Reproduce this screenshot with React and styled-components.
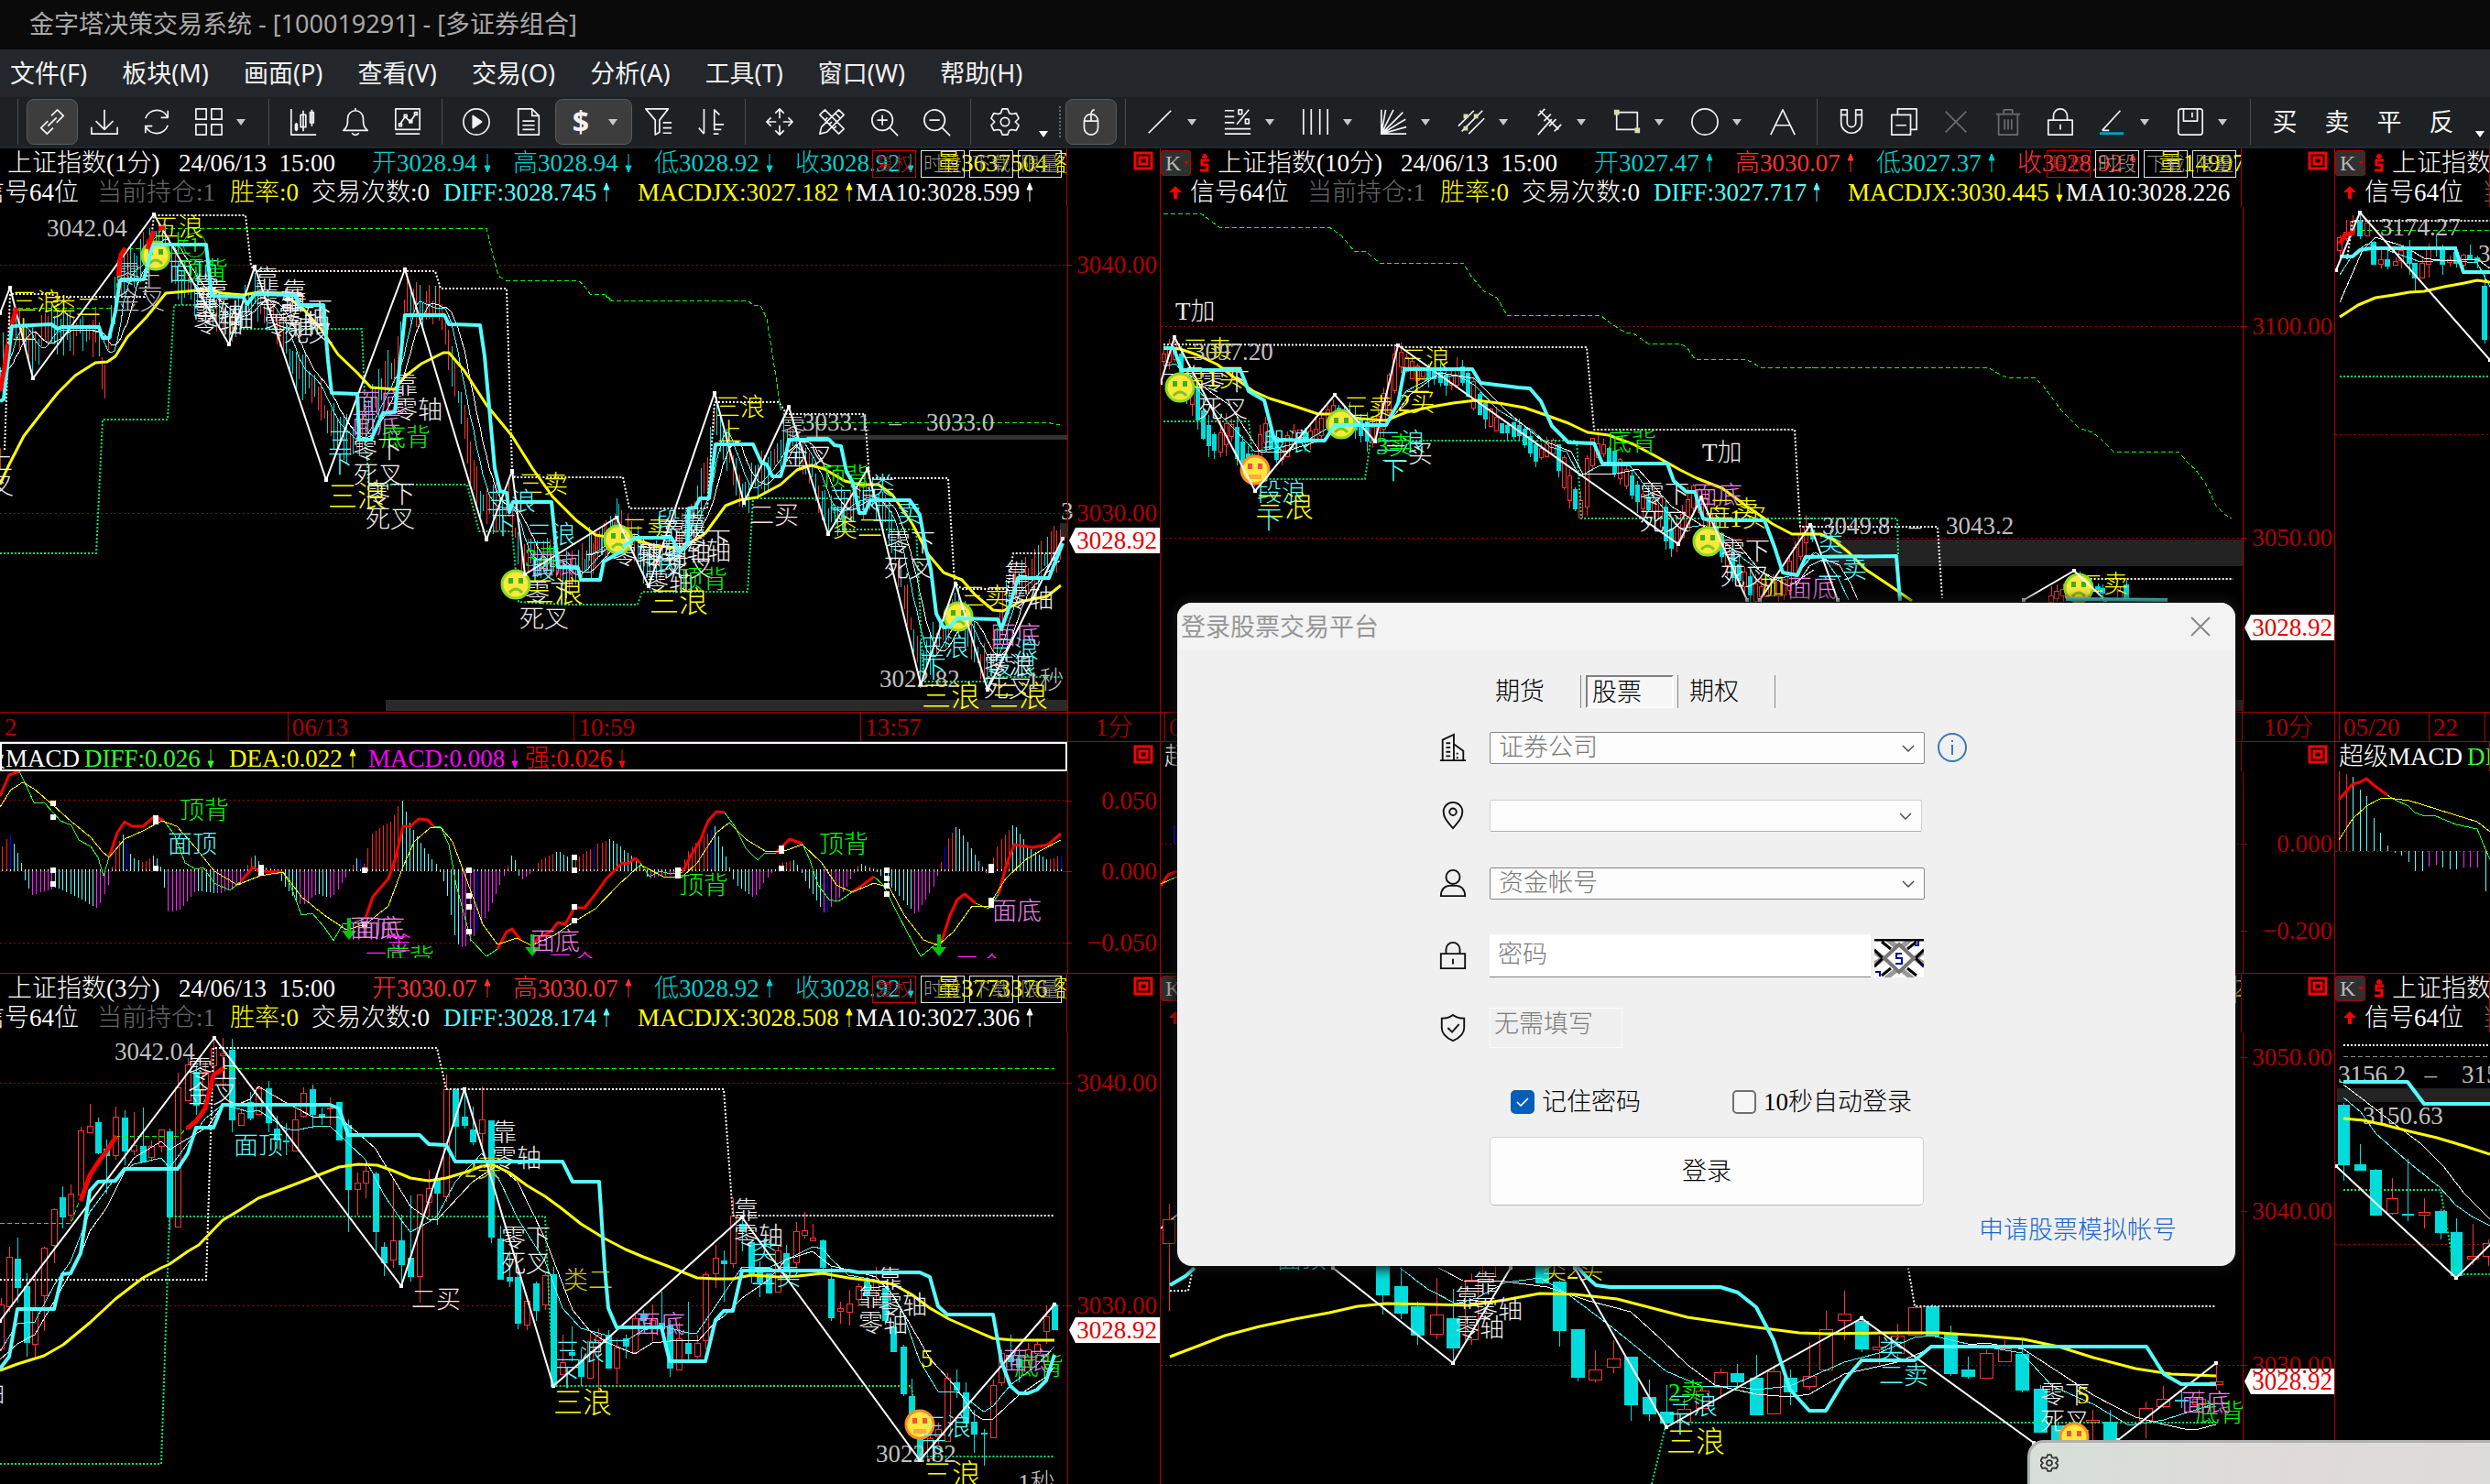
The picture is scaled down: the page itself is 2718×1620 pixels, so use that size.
import React, { useState } from "react";
import styled, { createGlobalStyle, css } from "styled-components";

const GlobalStyle = createGlobalStyle`
  * {
    box-sizing: border-box;
  }
  html, body, #root {
    height: 100%;
    margin: 0;
  }
  body {
    background: #000;
    overflow: hidden;
  }
  button, input, select {
    font: inherit;
    color: inherit;
    margin: 0;
    padding: 0;
  }
`;

const SONG = `"Liberation Serif", "Noto Sans CJK SC", serif`;
const UI = `"Noto Sans", "Noto Sans CJK SC", sans-serif`;

const RED = "#b00000";
const CYAN = "#55ffff";
const YELLOW = "#ffff00";
const GREEN = "#00ff00";
const GREY = "#c0c0c0";
const VIOLET = "#ee82ee";
const CANDLE_UP = "#ff3232";
const CANDLE_DOWN = "#00dcdc";

/* ---------- window frame ---------- */

const Screen = styled.div`
  height: 100vh;
  display: flex;
  flex-direction: column;
  position: relative;
  overflow: hidden;
  color: #fff;
  font-family: ${SONG};
  font-size: 27px;
  font-weight: 300;
  line-height: 32px;
`;

const TitleBar = styled.header`
  height: 54px;
  flex: none;
  padding: 0 32px 2px;
  display: flex;
  align-items: center;
  background: #0a0a0a;
  color: #a8a8a8;
  font-family: ${UI};
  font-weight: 400;
`;

const MenuBar = styled.nav`
  height: 52px;
  flex: none;
  padding: 0 11px;
  display: flex;
  align-items: center;
  gap: 38px;
  background: #23262b;
  font-family: ${UI};
  font-weight: 400;
`;

const MenuItem = styled.button`
  border: 0;
  background: none;
  color: #f0f0f0;
  white-space: nowrap;
`;

const ToolBar = styled.div`
  height: 56px;
  flex: none;
  padding-left: 19px;
  display: flex;
  align-items: center;
  gap: 1px;
  background: #1e2124;
  border-bottom: 2px solid #23262b;
  overflow: hidden;
`;

const Divider = styled.i`
  flex: none;
  width: 1px;
  height: 50px;
  margin: 0 8px;
  background: #4a4d50;
  &:first-child {
    margin-left: 0;
  }
`;

const ToolButton = styled.button`
  flex: none;
  width: ${(p) => (p.$menu ? 84 : 56)}px;
  height: 50px;
  display: flex;
  align-items: center;
  padding-left: 11px;
  border: 1px solid ${(p) => (p.$on ? "#5a5a5a" : "transparent")};
  border-radius: 8px;
  background: ${(p) => (p.$on ? "#3d3d3d" : "none")};
  color: ${(p) => (p.$off ? "#6a6c6e" : "#f2f2f2")};
  font-family: ${UI};
  font-weight: 400;
  svg {
    flex: none;
  }
`;

const Caret = styled.i`
  margin-left: 14px;
  border: 5px solid transparent;
  border-top: 7px solid #c8c8c8;
  border-bottom: 0;
`;

const OverflowCaret = styled(Caret)`
  margin: 26px 7px 0 8px;
  border-top-color: #fff;
`;

const Grip = styled.i`
  height: 34px;
  margin: 0 4px;
  border-left: 2px dotted #6a6c6e;
`;

/* ---------- chart panels ---------- */

const Workspace = styled.main`
  flex: 1;
  min-height: 0;
  display: grid;
  grid-template-columns: 1267fr 1282fr 169fr;
  grid-template-rows: 648fr 253fr 557fr;
`;

const Panel = styled.section`
  min-width: 0;
  min-height: 0;
  display: flex;
  flex-direction: column;
  overflow: hidden;
  border-right: 1px solid ${RED};
  border-bottom: 1px solid ${RED};
  &:nth-child(3n) {
    border-right: 0;
  }
  &:nth-child(n + 7) {
    border-bottom: 0;
  }
`;

const PanelTop = styled.div`
  flex: none;
  display: flex;
`;

const Head = styled.div`
  flex: 1;
  min-width: 0;
  position: relative;
  overflow: hidden;
  white-space: nowrap;
  border-right: 1px solid ${RED};
  ${(p) => p.$boxed && css`
    border: 2px solid #fff;
  `}
`;

const HeadLine = styled.div`
  display: flex;
  align-items: center;
  height: 32px;
  margin-left: ${(p) => (p.$scrolled ? -54 : 0)}px;
`;

const SignalLine = styled(HeadLine)`
  display: grid;
  justify-content: start;
  grid-template-columns: 32px 128px 145px 89px 144px 212px 238px 210px;
`;

const MacdLine = styled(HeadLine)`
  display: grid;
  justify-content: start;
  height: ${(p) => (p.$boxed ? 28 : 32)}px;
  grid-template-columns: 4px 140px 158px 152px 171px 160px;
`;

const AxisHead = styled.div`
  flex: none;
  width: 101px;
  padding: 3px 7px 0 0;
  text-align: right;
  line-height: 0;
`;

const Symbol = styled.span`
  flex: none;
  width: ${(p) => (p.$long ? 200 : 187)}px;
`;

const Stamp = styled.span`
  flex: none;
  width: 211px;
`;

const Quote = styled.span`
  flex: none;
  min-width: 154px;
  display: flex;
  align-items: center;
  gap: 6px;
  color: ${(p) => p.color};
`;

const KindButton = styled.button`
  flex: none;
  width: 33px;
  height: 28px;
  display: flex;
  align-items: center;
  gap: 3px;
  padding-left: 4px;
  border: 1px solid ${RED};
  border-radius: 3px;
  background: #303030;
  color: #b8b8b8;
  font-size: 24px;
  line-height: 24px;
`;

const HeadIcon = styled.span`
  flex: none;
  width: ${(p) => p.$w}px;
  display: flex;
  justify-content: center;
`;

const Tags = styled.div`
  position: absolute;
  top: 2px;
  right: 5px;
  display: flex;
  gap: 5px;
`;

const Tag = styled.button`
  width: 48px;
  height: 30px;
  border: 1px solid ${(p) => (p.$hot ? "#d00000" : "#e8e8e8")};
  background: none;
  color: ${(p) => (p.$hot ? "#a02020" : "#989898")};
  font-size: 21px;
  line-height: 26px;
`;

const Canvas = styled.svg`
  flex: 1;
  min-height: 0;
  width: 100%;
  display: block;
`;

const Mark = styled.text`
  font-size: ${(p) => (p.$big ? 32 : 27)}px;
  dominant-baseline: central;
`;

const TimeAxis = styled.div`
  flex: none;
  height: 32px;
  display: grid;
  grid-template-columns: ${(p) => p.$cols};
  border-top: 1px solid ${RED};
  color: ${RED};
  overflow: hidden;
`;

const Tick = styled.span`
  padding-left: 4px;
  white-space: nowrap;
  overflow: hidden;
  border-left: 1px solid ${(p) => (p.$bare ? "transparent" : RED)};
`;

const Period = styled.span`
  text-align: center;
  border-left: 1px solid ${RED};
`;

/* ---------- login window ---------- */

const Dialog = styled.form`
  position: absolute;
  left: 1285px;
  top: 658px;
  width: 1155px;
  display: flex;
  flex-direction: column;
  border-radius: 16px;
  background: #f0f0f0;
  color: #000;
  overflow: hidden;
  box-shadow: 0 0 12px 4px rgba(20, 20, 20, 0.9);
`;

const DialogTitle = styled.div`
  height: 52px;
  padding: 0 26px 0 4px;
  display: flex;
  align-items: center;
  justify-content: space-between;
  background: #f3f3f3;
  color: #979797;
  font-family: ${UI};
  font-weight: 400;
`;

const CloseButton = styled.button`
  width: 24px;
  height: 24px;
  border: 0;
  background: none;
  line-height: 0;
`;

const DialogBody = styled.div`
  padding: 27px 64px 23px 285px;
  display: flex;
  flex-direction: column;
`;

const Tabs = styled.div`
  display: flex;
  margin: 0 0 21px 50px;
`;

const Tab = styled.button`
  width: 106px;
  height: 36px;
  padding: 0 0 0 12px;
  border: 0;
  border-right: 1px solid #888;
  background: none;
  text-align: left;
  line-height: 34px;
  ${(p) => p.$on && css`
    padding: 0 4px 0 5px;
    span {
      display: block;
      height: 36px;
      padding-left: 5px;
      line-height: 34px;
      background: #f7f7f7;
      border: 2px solid #808080;
      border-right: 2px solid #fff;
      border-bottom: 2px solid #fff;
    }
  `}
`;

const Fields = styled.div`
  display: flex;
  flex-direction: column;
  gap: 30px;
`;

const Field = styled.div`
  height: ${(p) => (p.$tall ? 54 : 44)}px;
  display: flex;
  align-items: center;
  gap: 24px;
  svg {
    flex: none;
  }
`;

const Combo = styled.div`
  position: relative;
  width: ${(p) => (p.$dim ? 472 : 475)}px;
  svg {
    position: absolute;
    right: 10px;
    top: 10px;
    pointer-events: none;
  }
`;

const Select = styled.select`
  display: block;
  width: 100%;
  height: 35px;
  padding-left: 9px;
  appearance: none;
  border: 1px solid ${(p) => (p.$dim ? "#cfcfcf" : "#868686")};
  border-bottom-color: ${(p) => (p.$dim ? "#b0b0b0" : "#868686")};
  border-radius: 2px;
  background: #fdfdfd;
  color: #777;
  line-height: 32px;
`;

const InfoButton = styled.button`
  margin-left: -10px;
  width: 32px;
  height: 32px;
  border: 0;
  background: none;
  line-height: 0;
`;

const PasswordBox = styled.div`
  display: flex;
  align-items: end;
  gap: 4px;
`;

const TextInput = styled.input`
  width: ${(p) => (p.$short ? 145 : 416)}px;
  height: ${(p) => (p.$short ? 44 : 47)}px;
  padding: ${(p) => (p.$short ? "0 0 8px 4px" : "0 9px")};
  border: ${(p) => (p.$short ? "1px solid #fafafa" : "0")};
  border-bottom: 1px solid ${(p) => (p.$short ? "#fafafa" : "#808080")};
  background: ${(p) => (p.$short ? "none" : "#fff")};
  outline: 0;
  &::placeholder {
    color: #7b7b7b;
    opacity: 1;
  }
`;

const KeyboardButton = styled.button`
  width: 54px;
  height: 42px;
  border: 0;
  background: #fff;
  line-height: 0;
`;

const Checks = styled.div`
  display: flex;
  margin: 43px 0 22px 79px;
`;

const CheckLabel = styled.label`
  width: 242px;
  display: flex;
  align-items: center;
  gap: 8px;
  position: relative;
  white-space: nowrap;
  svg {
    position: absolute;
    left: 5px;
    pointer-events: none;
  }
`;

const CheckBox = styled.input`
  flex: none;
  width: 26px;
  height: 26px;
  appearance: none;
  border: 2px solid #707070;
  border-radius: 5px;
  background: #f6f6f6;
  &:checked {
    border-color: #005fb8;
    background: #005fb8;
  }
`;

const LoginButton = styled.button`
  width: 474px;
  height: 75px;
  margin-left: 56px;
  border: 1px solid #d0d0d0;
  border-bottom-color: #b8b8b8;
  border-radius: 5px;
  background: #fdfdfd;
`;

const ApplyLink = styled.a`
  align-self: flex-end;
  margin-top: 11px;
  color: #1a66cc;
  text-decoration: none;
`;

const Toast = styled.aside`
  position: absolute;
  right: 0;
  bottom: 0;
  width: 505px;
  height: 48px;
  padding: 12px 11px;
  border: solid #b0b0b0;
  border-width: 3px 0 0 3px;
  border-radius: 18px 0 0 0;
  background: linear-gradient(100deg, #d6dfd8, #e0dada 60%, #dcdcda);
  line-height: 0;
`;

/* ---------- chart drawing ---------- */

// each stretch of data has its own origin and scale
const scaleOf = (x0, y0, kx, ky) => ({
  x: (v) => Math.round(x0 + v / kx),
  y: (v) => Math.round(y0 + v / ky),
});
const MIN1_A = scaleOf(0, 160, 2.306, 2.45);
const MIN1_B = scaleOf(640, 160, 2.306, 2.45);
const MIN10_A = scaleOf(1260, 160, 2.178, 3);
const MIN10_B = scaleOf(1960, 160, 2.0686, 3);
const MACD = scaleOf(0, 780, 1.2155, 3);
const MIN3_A = scaleOf(0, 1050, 2.376, 2.751);
const MIN3_B = scaleOf(640, 1050, 2.376, 2.751);
const LOW10 = scaleOf(1260, 1370, 1.3067, 3);
const EDGE = scaleOf(2430, 640, 3, 1.6);
const PX = scaleOf(0, 0, 1, 1);

const parse = (s) => s.split(" ").map((p) => p.split(",").map(Number));

const at = (pts, x) => {
  const i = pts.findIndex((p) => p[0] >= x);
  if (i <= 0) return pts[i === 0 ? 0 : pts.length - 1][1];
  const [x1, y1] = pts[i - 1];
  const [x2, y2] = pts[i];
  return y1 + ((y2 - y1) * (x - x1)) / (x2 - x1 || 1);
};

const noise = (n) => {
  const v = Math.sin(n * 12.9898) * 43758.5453;
  return v - Math.floor(v);
};

const average = (pts, span, lag) => {
  const out = [];
  for (let x = pts[0][0]; x <= pts[pts.length - 1][0]; x += 8) {
    let sum = 0;
    for (let k = 0; k < 6; k++) sum += at(pts, x - lag - (k * span) / 6);
    out.push(`${x},${Math.round(sum / 6)}`);
  }
  return out.join(" ");
};

const range = (from, to) => `${from}\u00a0\u00a0\u00a0–\u00a0\u00a0\u00a0\u00a0${to}`;

const Line = ({ s, d, c, w = 1, dash }) => (
  <polyline
    points={parse(d).map(([x, y]) => `${s.x(x)},${s.y(y)}`).join(" ")}
    fill="none"
    stroke={c}
    strokeWidth={w}
    strokeDasharray={dash}
    strokeLinejoin="round"
    shapeRendering={w === 1 ? "crispEdges" : undefined}
  />
);
const Dotted = (p) => <Line {...p} w={2} dash="2 2" />;
const Dashed = (p) => <Line {...p} c={GREEN} w={1} dash="5 3" />;
const Avg = (p) => <Line {...p} c={YELLOW} w={3} />;
const Band = (p) => <Line {...p} c={CYAN} w={4} />;
const Zigzag = ({ s, d }) => (
  <g>
    <Line s={s} d={d} c="#fff" w={2} />
    {parse(d).map(([x, y], i) => (
      <rect key={i} x={s.x(x) - 2} y={s.y(y) - 2} width="4" height="4" fill="#fff" />
    ))}
  </g>
);
const Grid = ({ y, x1, x2 }) => (
  <line x1={x1} x2={x2} y1={y + 0.5} y2={y + 0.5} stroke="#a00000" strokeDasharray="2 3" />
);

const Bars = ({ s, path, step = 8, reach = 60 }) => {
  const out = [];
  for (let x = path[0][0], i = 0; x <= path[path.length - 1][0]; x += step, i++) {
    const y = at(path, x);
    const up = noise(i + 7) > 0.5;
    out.push(
      <line
        key={i}
        x1={s.x(x) + 0.5}
        x2={s.x(x) + 0.5}
        y1={s.y(y - 10 - noise(i) * reach)}
        y2={s.y(y + 10 + noise(i + 99) * reach)}
        stroke={up ? CANDLE_UP : CANDLE_DOWN}
      />
    );
  }
  return out;
};

const Candle = ({ x, top, bottom, high, low, up, w }) => (
  <g shapeRendering="crispEdges" stroke={up ? CANDLE_UP : CANDLE_DOWN} fill={up ? "#000" : CANDLE_DOWN}>
    <line x1={x} x2={x} y1={high} y2={low} />
    <rect x={x - w / 2} y={top} width={w} height={Math.max(1, bottom - top)} />
  </g>
);

// rows are: r/c, x, body top, body bottom, high, low
const Candles = ({ s, w = 6, rows }) =>
  rows.split(" ").map((r, i) => {
    const [x, top, bottom, high, low] = r.slice(1).split(",").map(Number);
    return (
      <Candle key={i} x={s.x(x)} top={s.y(top)} bottom={s.y(bottom)} high={s.y(high)} low={s.y(low)} up={r[0] === "r"} w={w} />
    );
  });

const CandlesAlong = ({ s, path, step = 13.4, w = 4 }) => {
  const out = [];
  for (let x = path[0][0], i = 0; x <= path[path.length - 1][0]; x += step, i++) {
    const y = at(path, x);
    const slope = at(path, x + step) - at(path, x - step);
    const half = 8 + Math.abs(slope) / 3 + noise(i) * 16;
    out.push(
      <Candle
        key={i}
        x={s.x(x)}
        top={s.y(y - half)}
        bottom={s.y(y + half)}
        high={s.y(y - half - noise(i + 3) * 40)}
        low={s.y(y + half + noise(i + 5) * 40)}
        up={slope < 0 || noise(i + 50) > 0.7}
        w={w}
      />
    );
  }
  return out;
};

const Marks = ({ s, items }) =>
  items.map(([x, y, text, color = "#f0f0f0", big], i) => (
    <Mark key={i} x={s.x(x)} y={s.y(y)} fill={color} $big={big}>
      {text}
    </Mark>
  ));

const Face = ({ s, x, y, calm }) => (
  <g transform={`translate(${s.x(x)} ${s.y(y)})`}>
    <circle r="15" fill="#ffe83c" stroke={calm ? "#ff8c28" : "#8cdc1e"} strokeWidth="3" />
    <path d="M-8-7h5v6h-5zM3-7h5v6h-5z" fill={calm ? "#f0503c" : "#32b414"} />
    {calm ? (
      <path d="M-7 5H7v5H-7z" fill="#ffaa3c" />
    ) : (
      <path d="M-7 9Q0 1 7 9" fill="none" stroke="#78c81e" strokeWidth="3" />
    )}
  </g>
);

const PriceTag = ({ x, y }) => (
  <g>
    <path d={`M${x} ${y}l7-14h92v28h-92z`} fill="#fff" />
    <Mark x={x + 96} y={y} fill="#e00000" textAnchor="end">3028.92</Mark>
  </g>
);

const Chart = ({ x, y, axis, labels = [], children }) => (
  <Canvas>
    <g transform={`translate(${-x} ${-y})`}>
      {children}
      {axis && <line x1={axis - 0.5} x2={axis - 0.5} y1={y} y2="1700" stroke={RED} />}
      {labels.map(([ly, text]) => (
        <g key={text}>
          <line x1={axis - 3} x2={axis + 4} y1={ly + 0.5} y2={ly + 0.5} stroke={RED} />
          <Mark x={axis + 97} y={ly} fill={RED} textAnchor="end">{text}</Mark>
        </g>
      ))}
    </g>
  </Canvas>
);

const MIN1_PATH_A = parse("0,600 30,460 60,500 83,560 120,490 200,490 245,500 262,640 275,500 300,340 340,320 388,240 410,250 450,350 500,400 577,470 641,390 700,470 740,600 780,620 830,740 890,800 940,690 1000,560 1020,400 1060,430 1110,430 1130,560 1170,760 1200,920 1230,970 1280,960 1310,1100 1400,1110 1430,1160 1500,1080 1552,1010");
const MIN1_PATH_B = parse("0,1090 77,1020 120,1070 156,1120 240,1050 300,900 323,720 360,830 396,930 460,850 509,760 560,850 609,990 660,950 709,930 760,1000 800,1200 841,1390 900,1290 929,1230 970,1330 1010,1400 1060,1200 1120,1140 1195,1060");

const OneMinute = () => (
  <Chart x={0} y={226} axis={1166} labels={[[289, "3040.00"], [560, "3030.00"]]}>
    <Grid y={289} x1={0} x2={1166} />
    <Grid y={560} x1={0} x2={1166} />
    <rect x="868" y="475" width="298" height="5" fill="#333" />
    <rect x="1157" y="571" width="9" height="16" fill="#282828" />
    <rect x="421" y="764" width="745" height="12" fill="#2a2a2a" />
    <Bars s={MIN1_A} path={MIN1_PATH_A} />
    <Bars s={MIN1_B} path={MIN1_PATH_B} />
    <Line s={MIN1_A} c={CYAN} d={average(MIN1_PATH_A, 40, 6)} />
    <Line s={MIN1_A} c="#fff" d={average(MIN1_PATH_A, 64, 14)} />
    <Line s={MIN1_B} c={CYAN} d={average(MIN1_PATH_B, 40, 6)} />
    <Line s={MIN1_B} c="#fff" d={average(MIN1_PATH_B, 64, 14)} />
    <Dotted s={MIN1_A} c="#fff" d="12,810 26,395 130,395 140,401 365,401 388,183 617,183 632,318 641,333 1095,333 1110,379 1275,380 1288,868 1295,884 1568,884" />
    <Dotted s={MIN1_B} c="#fff" d="92,884 93,884 108,967 305,967 322,683 485,683 505,715 700,715 712,888 912,888 928,1165 945,1183 1060,1183 1075,1087 1180,1087" />
    <Dotted s={MIN1_A} c="#00e676" d="0,1087 242,1087 258,730 422,730 437,423 520,423 590,487 912,487 928,903 1175,903 1205,1028 1290,1028 1305,1217 1425,1226 1568,1226" />
    <Dotted s={MIN1_B} c="#00e676" d="92,1226 128,1226 140,1190 405,1190 420,940 615,940 635,1025 830,1025 848,1430 1000,1430 1010,1418 1195,1418" />
    <Dashed s={MIN1_A} d="45,432 290,432 300,300 318,273 370,273 410,219 1225,219 1240,290 1255,345 1272,358 1455,358 1470,370 1485,395 1525,397 1540,412" />
    <Dashed s={MIN1_B} d="45,395 60,412 405,412 420,424 438,425 455,460 475,600 490,700 510,738 1160,738 1175,743 1192,743" />
    <Avg s={MIN1_A} d="0,905 20,855 60,775 100,720 145,660 190,612 240,578 270,576 290,560 320,510 370,455 418,392 470,388 520,382 560,392 610,397 650,390 710,393 760,430 810,490 850,555 900,605 935,645 995,650 1020,615 1060,580 1115,551 1130,552 1170,600 1225,690 1290,773 1340,860 1390,935 1450,1000 1500,1040 1568,1050" />
    <Avg s={MIN1_B} d="92,1050 110,1045 165,1065 240,1075 300,1035 350,960 385,945 430,938 490,905 530,865 565,852 600,862 650,895 690,903 735,903 770,930 820,1010 860,1090 900,1140 945,1160 980,1200 1025,1240 1050,1243 1090,1218 1160,1203 1195,1173" />
    <Marks
      s={MIN1_A}
      items={[
        [118, 217, "3042.04", GREY], [388, 217, "五浪", YELLOW], [30, 417, "三浪", YELLOW],
        [128, 432, "类二", YELLOW], [30, 492, "上", YELLOW], [290, 342, "零", GREY], [345, 355, "上", GREY],
        [290, 415, "金叉", GREY], [425, 335, "面顶", CYAN], [450, 333, "顶背", GREEN], [460, 268, "①", GREEN],
        [420, 262, "上", GREEN], [487, 375, "靠"], [515, 390, "靠"], [490, 410, "靠"], [487, 445, "零轴"],
        [487, 475, "零轴"], [577, 460, "轴"], [640, 355, "靠"], [643, 415, "零轴"], [710, 390, "靠"],
        [705, 420, "靠"], [665, 480, "零轴"], [700, 455, "零轴"], [775, 440, "下"], [715, 500, "死叉"],
        [768, 475, "轴"], [990, 640, "靠"], [990, 705, "零轴"], [895, 685, "面底", VIOLET],
        [885, 745, "面底", VIOLET], [960, 778, "底背", GREEN], [825, 790, "三", CYAN], [825, 850, "下", CYAN],
        [887, 812, "零下"], [890, 880, "死叉"], [825, 935, "三浪", YELLOW, true], [920, 930, "零下"],
        [920, 997, "死叉"], [-30, 840, "上"], [-27, 908, "叉"], [1305, 905, "三卖", YELLOW],
        [1225, 950, "三浪", CYAN], [1235, 1015, "下", CYAN], [1325, 1040, "三浪", CYAN],
        [1322, 1100, "3卖", GREEN], [1335, 1120, "面底", VIOLET], [1338, 1135, "段", CYAN],
        [1322, 1195, "零下"], [1322, 1190, "三浪", YELLOW, true], [1307, 1265, "死叉"],
      ]}
    />
    <Marks
      s={MIN1_B}
      items={[
        [90, 1025, "三卖", YELLOW], [175, 1005, "段类", CYAN], [190, 1030, "靠"], [240, 1015, "靠"],
        [65, 1095, "零轴"], [130, 1095, "零轴"], [190, 1085, "零轴"], [180, 1120, "段", CYAN],
        [195, 1130, "死叉"], [240, 1055, "零下"], [302, 1082, "轴"], [145, 1165, "零轴"],
        [230, 1160, "顶背", GREEN], [160, 1218, "三浪", YELLOW, true], [325, 698, "三浪", YELLOW],
        [330, 765, "上", YELLOW], [490, 755, "零上", GREY], [495, 830, "金叉"],
        [545, 737, range("3033.1", "3033.0"), GREY], [590, 885, "顶背", GREEN], [715, 910, "类", CYAN],
        [610, 945, "三浪", CYAN], [615, 1000, "下", CYAN], [720, 983, "二卖", CYAN], [620, 1022, "类二", YELLOW],
        [410, 988, "二买", "#ffe0e0"], [755, 1062, "零下"], [750, 1130, "死叉"], [840, 1340, "三浪", CYAN],
        [845, 1400, "下", CYAN], [738, 1423, "3022.82", GREY], [845, 1470, "三浪", YELLOW, true],
        [940, 1205, "三卖", YELLOW], [1052, 1145, "靠"], [1052, 1210, "零轴"], [1020, 1308, "面底", VIOLET],
        [1015, 1345, "三浪", CYAN], [1010, 1390, "段浪", CYAN], [1000, 1390, "零浪"], [1000, 1450, "死叉"],
        [1015, 1470, "三浪", YELLOW, true], [1110, 1428, "1秒", GREY], [1195, 975, "3", GREY],
      ]}
    />
    <Face s={MIN1_A} x={393} y={292} />
    <Face s={MIN1_A} x={1298} y={1170} />
    <Face s={MIN1_B} x={80} y={1052} />
    <Face s={MIN1_B} x={936} y={1258} />
    <Zigzag s={MIN1_A} d="0,445 26,378 83,620 388,182 577,528 641,320 821,892 1020,328 1224,1050 1289,868 1322,1143 1552,992" />
    <Zigzag s={MIN1_B} d="77,992 156,1175 323,658 396,953 509,695 609,1036 709,862 841,1437 929,1168 1010,1453 1199,1048" />
    <Band s={MIN1_A} d="0,680 10,675 30,480 130,476 145,487 155,482 248,482 258,512 275,512 290,440 302,357 362,356 385,261 520,261 532,400 612,401 622,422 642,395 742,396 755,425 815,425 825,570 835,659 900,661 905,785 935,785 965,712 995,711 1020,452 1118,452 1130,476 1208,477 1220,560 1245,860 1260,922 1275,925 1282,978 1292,950 1388,951 1405,1125 1455,1126 1462,1160 1510,1160 1520,1110 1568,1080" />
    <Band s={MIN1_B} d="92,1070 125,1045 215,1045 235,1085 255,1060 258,967 275,965 285,942 310,940 325,797 420,797 440,845 455,850 468,883 488,883 498,850 510,783 612,783 625,798 640,800 655,870 672,900 688,980 700,980 715,946 815,946 840,985 855,1080 868,1130 882,1250 900,1287 915,1285 935,1262 1035,1263 1045,1290 1065,1230 1085,1155 1165,1155 1180,1110 1200,1060" />
    <Line s={MIN1_A} c="#f00" w={5} d="0,655 12,590 18,530" />
    <Line s={MIN1_A} c="#f00" w={5} d="30,475 42,430" />
    <Line s={MIN1_A} c="#f00" w={5} d="297,345 305,290 317,271" />
    <Line s={MIN1_A} c="#f00" w={5} d="372,275 388,225" />
    <Line s={MIN1_A} c="#f00" w={5} d="400,219 415,219" />
    <PriceTag x={1167} y={590} />
  </Chart>
);

const MIN10_PATH = parse("22,690 47,660 70,770 100,830 120,930 150,980 180,920 210,1010 235,1060 265,930 300,1010 340,940 380,950 420,870 470,900 525,950 560,800 580,690 620,740 660,740 700,770 730,740 770,840 820,920 870,930 910,1010 950,980 990,1130 1015,1190 1040,1000 1070,990 1110,1060 1160,1160 1200,1180 1230,1290 1265,1220 1285,1130 1330,1260 1380,1380 1430,1460 1500,1440 1545,1270 1568,1270");

const TenMinute = () => (
  <Chart x={1267} y={226} axis={2449} labels={[[356, "3100.00"], [587, "3050.00"]]}>
    <Grid y={356} x1={1267} x2={2449} />
    <Grid y={587} x1={1267} x2={2449} />
    <rect x="1996" y="589" width="453" height="29" fill="#232323" />
    <rect x="1300" y="764" width="1149" height="12" fill="#2a2a2a" />
    <CandlesAlong s={MIN10_A} path={MIN10_PATH} />
    <Candles s={MIN10_B} w={5} rows="r578,1470,1490,1440,1490 r590,1456,1480,1435,1490 r604,1450,1470,1430,1490 c642,1410,1430,1392,1440 c682,1440,1450,1430,1470 c694,1445,1460,1435,1480 r732,1455,1480,1440,1485 c746,1434,1480,1420,1485" />
    <Line s={MIN10_A} c={CYAN} d="22,720 50,710 100,790 140,855 190,925 240,1000 300,985 360,965 420,915 500,905 560,890 600,800 660,755 720,750 760,780 820,865 900,930 940,985 980,1000 1010,1080 1060,1045 1130,1045 1160,1100 1250,1250 1310,1240 1400,1350 1470,1420 1530,1400 1568,1330" />
    <Line s={MIN10_A} c="#fff" d="22,745 80,745 130,800 180,850 250,1000 310,1000 400,960 440,905 550,915 610,810 680,740 760,760 840,870 920,960 990,1000 1020,1075 1100,1072 1150,1055 1230,1180 1300,1240 1380,1290 1440,1390 1510,1440 1568,1385" />
    <Line s={MIN10_B} c={CYAN} d="0,1400 20,1370 45,1330 70,1360 95,1410 120,1485" />
    <Line s={MIN10_B} c="#fff" d="0,1440 30,1375 65,1350 100,1370 125,1430 140,1485" />
    <Dotted s={MIN10_A} c="#fff" d="22,648 575,650 590,657 1028,657 1045,927 1522,927 1535,1245 1568,1245" />
    <Dotted s={MIN10_B} c="#fff" d="25,1245 320,1245 332,1480" />
    <Dotted s={MIN10_B} c="#fff" d="610,1480 618,1416 988,1416" />
    <Dotted s={MIN10_A} c="#00e676" d="22,900 225,900 240,1088 500,1088 515,963 1003,963 1015,1218 1568,1218" />
    <Dotted s={MIN10_B} c="#00e676" d="25,1218 230,1218 232,1340" />
    <Dashed s={MIN10_A} d="22,220 110,220 130,240 155,265 415,265 445,290 475,342 500,343 535,382 735,382 755,430 785,475 815,495 838,553 1060,553 1085,580 1120,610 1140,612 1175,646 1250,646 1268,660 1285,697 1400,697 1420,705 1440,724 1568,724" />
    <Dashed s={MIN10_B} d="25,724 435,724 455,740 475,755 540,757 560,785 600,865 640,920 670,937 690,960 718,1000 865,1000 885,1035 905,1058 925,1100 950,1175 970,1205 985,1217" />
    <Avg s={MIN10_A} d="22,658 60,662 100,680 150,715 190,755 235,800 275,825 330,850 390,875 430,877 490,890 550,897 600,870 660,852 710,840 765,830 820,840 880,855 930,880 985,905 1030,937 1080,945 1140,975 1200,1020 1250,1060 1290,1085 1350,1120 1410,1180 1470,1235 1515,1268 1568,1270" />
    <Avg s={MIN10_B} d="15,1268 55,1268 85,1288 120,1330 160,1385 215,1440 262,1488" />
    <Marks
      s={MIN10_A}
      items={[
        [50, 540, "T加"], [68, 665, "三卖", YELLOW], [92, 672, "3097.20", GREY], [65, 760, "盘1买", YELLOW],
        [108, 770, "零下"], [105, 860, "死叉"], [258, 970, "段浪", CYAN], [245, 1135, "段浪", CYAN],
        [240, 1180, "三浪", YELLOW, true], [245, 1225, "下", CYAN], [450, 855, "三卖", YELLOW],
        [580, 840, "2买", YELLOW], [585, 700, "三浪", YELLOW], [597, 775, "上", YELLOW],
        [527, 970, "三浪", CYAN], [527, 980, "3卖", GREEN], [545, 1008, "二买"], [540, 1062, "下", CYAN],
        [1075, 970, "底背", GREEN], [1303, 1003, "T加"], [1155, 1140, "零下"], [1280, 1143, "面底", VIOLET],
        [1155, 1230, "死叉"], [1320, 1190, "三卖", YELLOW], [1310, 1218, "盘1买", YELLOW],
        [1345, 1325, "零下"], [1345, 1410, "死叉"], [1440, 1440, "加", YELLOW], [1505, 1450, "面底", VIOLET],
      ]}
    />
    <Marks
      s={MIN10_B}
      items={[
        [52, 1300, "类", CYAN], [50, 1385, "二卖", CYAN], [60, 1243, range("3049.8", "3043.2"), GREY],
        [640, 1435, "二卖", YELLOW],
      ]}
    />
    <Face s={MIN10_A} x={60} y={788} />
    <Face s={MIN10_A} x={239} y={1060} calm />
    <Face s={MIN10_A} x={444} y={908} />
    <Face s={MIN10_A} x={1315} y={1292} />
    <Face s={MIN10_B} x={640} y={1445} />
    <Zigzag s={MIN10_A} d="15,775 47,625 240,1128 430,812 525,965 579,650 1245,1302 1300,1148 1410,1485" />
    <Zigzag s={MIN10_B} d="-80,1485 33,1238 95,1485" />
    <Zigzag s={MIN10_B} d="515,1485 628,1388 700,1485" />
    <Band s={MIN10_A} d="22,660 45,660 65,733 205,733 225,800 262,830 285,960 405,962 430,912 550,912 580,840 595,730 755,730 775,775 830,782 865,790 892,792 920,835 945,915 985,970 1045,971 1065,1037 1220,1037 1235,1095 1265,1130 1285,1130 1305,1218 1320,1225 1450,1225 1475,1310 1495,1395 1530,1405 1548,1345 1568,1345" />
    <Band s={MIN10_B} d="20,1345 228,1342 236,1488" />
    <Band s={MIN10_B} d="610,1483 840,1485" />
    <PriceTag x={2450} y={685} />
  </Chart>
);

const EdgeTop = () => (
  <Chart x={2549} y={226}>
    <Grid y={474} x1={2549} x2={2718} />
    <Candles s={MIN10_B} w={5} rows="r1228,298,338,290,360 r1243,280,300,240,310 r1258,243,280,225,290 c1275,246,291,220,303 r1290,250,292,245,293 c1306,312,384,310,385 r1321,370,383,340,398 c1337,370,390,342,402 r1354,375,386,362,390 r1368,340,373,325,398 c1385,335,381,305,420 c1399,381,430,380,470 r1415,380,428,370,433 r1430,327,383,318,430 c1446,330,333,288,360 c1461,335,384,322,420 r1478,370,378,358,392 c1492,345,380,328,395 r1508,355,388,350,395 c1523,353,366,320,368 c1540,362,375,357,400 c1556,456,630,410,645" />
    <Line s={MIN10_B} c={CYAN} d="1228,420 1260,350 1290,318 1330,335 1360,350 1410,378 1470,373 1540,380 1568,460" />
    <Line s={MIN10_B} c="#fff" d="1228,510 1280,340 1310,298 1380,330 1420,365 1470,375 1540,370 1568,400" />
    <Dotted s={MIN10_B} c="#fff" d="1245,370 1258,243 1568,243" />
    <Dotted s={MIN10_B} c="#00e676" d="1228,752 1568,752" />
    <Dashed s={MIN10_B} d="1275,272 1568,272" />
    <Marks s={MIN10_B} items={[[1320, 265, "3174.27", GREY], [1542, 350, "3", GREY]]} />
    <Avg s={MIN10_B} d="1228,557 1270,520 1310,495 1350,487 1385,478 1420,475 1465,460 1510,447 1540,438 1568,445" />
    <Band s={MIN10_B} d="1228,361 1258,361 1274,338 1300,334 1490,334 1508,411 1568,412" />
    <Zigzag s={MIN10_B} d="1220,405 1274,215 1568,698" />
    <Line s={MIN10_B} c="#f00" w={5} d="1228,318 1242,288 1262,283" />
  </Chart>
);

const MACD_TIPS = parse("0,450 12,390 30,500 33,545 42,595 60,580 75,570 105,605 130,640 145,550 150,470 162,390 175,470 190,490 205,460 215,510 222,650 240,640 260,580 290,590 320,560 330,480 337,460 348,500 365,510 375,560 400,630 420,590 440,605 460,530 475,465 485,500 490,400 508,365 520,350 532,278 545,370 560,430 580,500 590,560 605,750 615,770 625,740 650,640 670,520 680,450 690,550 705,520 715,480 740,450 762,480 790,430 810,410 840,470 860,540 885,530 900,520 915,440 930,410 948,370 965,480 975,560 1000,605 1020,530 1035,490 1055,480 1070,560 1095,660 1120,580 1140,490 1160,510 1180,560 1215,660 1240,560 1255,420 1270,365 1290,450 1310,530 1325,420 1345,360 1365,440 1390,480 1408,465");
const MACD_DIFF = "0,270 12,200 25,190 32,220 45,290 60,295 70,325 80,350 95,365 105,415 120,435 130,470 137,530 145,470 155,390 165,355 175,370 190,370 205,335 218,352 232,400 245,490 260,510 270,505 285,555 305,580 320,550 335,505 345,515 375,518 385,560 400,660 415,655 430,700 443,745 455,690 470,685 485,670 495,600 515,540 525,470 535,370 545,368 555,345 568,348 575,370 585,372 595,430 605,560 625,740 645,795 660,770 672,715 680,705 690,740 705,758 715,735 730,715 740,685 750,690 762,635 775,635 790,590 805,540 825,490 833,492 842,475 850,490 862,535 875,515 890,525 905,520 915,470 930,410 940,350 950,322 962,325 975,370 990,440 1005,480 1015,455 1030,455 1048,412 1065,425 1075,480 1085,560 1100,610 1112,615 1130,585 1145,560 1160,535 1172,560 1190,650 1205,720 1222,795 1240,760 1250,745 1260,660 1270,610 1280,590 1295,620 1312,640 1325,590 1335,500 1345,430 1370,437 1390,430 1408,392";
const RISES = [[0, 25], [145, 218], [320, 375], [485, 575], [660, 690], [705, 850], [905, 962], [1030, 1065], [1130, 1160], [1250, 1295], [1325, 1408]];
const HANDLES = parse("70,294 70,339 70,513 70,558 207,343 207,355 207,508 346,505 346,523 484,513 484,690 622,513 622,597 622,633 622,714 762,471 762,513 762,633 762,677 899,513 899,530 1037,440 1037,450 1037,508 1176,513 1176,540 1176,563 1176,590 1315,501 1315,513 1315,612 1315,626");

const Histogram = ({ s, tips, base }) => {
  const out = [];
  for (let x = 3, i = 0; x < 1410; x += 5, i++) {
    const y = at(tips, x);
    const rising = at(tips, x + 5) < y;
    let color = rising ? "#ff2020" : CYAN;
    if (y > base) color = rising ? "#ff20ff" : CYAN;
    if (i % 31 === 2) color = "#0000ff";
    out.push(<line key={i} x1={s.x(x) + 0.5} x2={s.x(x) + 0.5} y1={s.y(base)} y2={s.y(y)} stroke={color} />);
    out.push(<rect key={`t${i}`} x={s.x(x)} y={s.y(base) - 1} width="1" height="2" fill="#fff" />);
  }
  return out;
};

const MacdOne = () => (
  <Chart x={0} y={843} axis={1166} labels={[[875, "0.050"], [952, "0.000"], [1030, "−0.050"]]}>
    <Grid y={874} x1={0} x2={1166} />
    <Grid y={952} x1={0} x2={1166} />
    <Grid y={1030} x1={0} x2={1166} />
    <Histogram s={MACD} tips={MACD_TIPS} base={513} />
    <Line s={MACD} c="#32ff32" d={MACD_DIFF} />
    {RISES.map(([from, to]) => (
      <Line
        key={from}
        s={MACD}
        c="#f00"
        w={3}
        d={MACD_DIFF.split(" ").filter((p) => parseInt(p, 10) >= from && parseInt(p, 10) <= to).join(" ")}
      />
    ))}
    <Line s={MACD} c={YELLOW} d="0,305 15,250 30,225 45,245 70,300 95,355 120,405 135,450 145,470 165,410 190,385 215,352 235,370 260,440 285,515 315,560 345,530 375,520 400,600 430,660 460,708 485,690 515,630 535,500 550,420 570,375 585,372 600,420 620,550 640,690 660,755 685,735 705,758 735,725 762,680 790,640 820,560 850,495 880,535 905,535 925,490 950,390 968,357 990,410 1015,450 1040,450 1065,428 1090,490 1110,560 1130,585 1160,555 1180,570 1200,660 1225,740 1245,758 1265,715 1290,630 1312,630 1335,540 1360,480 1380,450 1408,415" />
    {HANDLES.map(([x, y], i) => (
      <rect key={i} x={MACD.x(x) - 3} y={MACD.y(y) - 3} width="6" height="6" fill="#fff" />
    ))}
    {[[462, 670], [705, 722], [1245, 724]].map(([x, y]) => (
      <path key={x} d={`M${MACD.x(x) - 1} ${MACD.y(y)}v14h-6l8 10 8-10h-6v-14z`} fill="#00c800" />
    ))}
    <Marks
      s={MACD}
      items={[
        [238, 317, "顶背", GREEN], [222, 430, "面顶", CYAN], [901, 563, "顶背", GREEN], [1087, 428, "顶背", GREEN],
        [464, 705, "面底", VIOLET], [472, 705, "面底", VIOLET], [704, 748, "面底", VIOLET], [1316, 648, "面底", VIOLET],
      ]}
    />
    <svg x="380" y="1020" width="740" height="27" overflow="hidden">
      <Marks s={PX} items={[[42, 9, "金", "#ff20ff"], [17, 32, "三", "#ff20ff"], [40, 27, "底背", GREEN], [218, 34, "三金", "#ff20ff"], [662, 36, "三金", "#ff20ff"]]} />
    </svg>
  </Chart>
);

const MacdTen = () => (
  <Chart x={1267} y={843} axis={2449} labels={[[922, "0.000"], [1017, "−0.200"]]}>
    <Grid y={922} x1={1267} x2={2449} />
    <Line s={PX} c="#0000ff" w={2} d="1282,902 1282,922" />
    <Line s={PX} c="#f00" w={3} d="1267,968 1275,956 1285,952" />
    <Line s={PX} c={YELLOW} d="1267,966 1285,958" />
  </Chart>
);

const EDGE_BARS = "r370,325 r394,330 c415,335 c439,357 c460,368 c484,406 c505,432 c529,454 c553,467 c574,472 c598,483 c619,499 c643,499 m664,491 m688,488 c709,493 c733,496 c754,496 m778,493 m799,493 m823,493 c848,535";
const EDGE_COLORS = { r: "#ff2020", c: CYAN, m: "#ff20ff" };

const MacdEdge = () => (
  <Chart x={2549} y={843}>
    <Grid y={930} x1={2549} x2={2718} />
    {EDGE_BARS.split(" ").map((b) => {
      const [x, y] = b.slice(1).split(",");
      return <Line key={b} s={EDGE} c={EDGE_COLORS[b[0]]} d={`${x},464 ${x},${y}`} />;
    })}
    <Line s={EDGE} c="#32ff32" d="529,366 553,375 598,385 619,397 643,402 688,403 754,418 823,425 848,460 864,478" />
    <Line s={EDGE} c={YELLOW} d="370,445 415,408 460,385 505,373 529,371 600,376 688,390 754,402 823,412 864,430" />
    <Line s={EDGE} c="#f00" w={3} d="370,375 415,347 439,344 460,338 484,348 529,366" />
  </Chart>
);

const ThreeMinute = () => (
  <Chart x={0} y={1127} axis={1166} labels={[[1182, "3040.00"], [1425, "3030.00"]]}>
    <Grid y={1182} x1={0} x2={1166} />
    <Grid y={1425} x1={0} x2={1166} />
    <Candles s={MIN3_A} rows="r2,1030,1160,1010,1170 r23,887,1035,856,1050 c46,891,977,828,1022 c68,974,1141,936,1186 r91,1037,1148,928,1188 r115,859,1000,855,1110 r139,744,851,740,905 c162,707,765,674,800 r184,697,760,669,780 r208,507,700,495,710 r232,493,513,427,515 c255,481,571,468,578 c276,562,580,535,695 r300,465,581,435,593 c324,468,566,445,610 r348,551,568,452,580 c370,553,599,437,600 r393,554,587,537,600 r417,504,554,504,572 c440,509,766,502,805 r462,378,796,333,797 r486,309,416,290,417 c509,330,430,310,460 r533,330,400,300,440 r554,258,310,225,345 r578,275,281,228,380 c602,264,472,232,513 r626,455,491,440,492 c648,421,469,390,475 r671,379,458,375,460 c695,380,481,359,513 c718,501,535,463,560 c742,537,540,485,580 r764,474,568,442,569 r787,394,463,376,468 c811,382,458,368,502 c834,457,465,438,490 r856,437,441,408,490 c880,421,533,420,534 c904,491,682,472,811 r927,664,681,632,762 r949,628,664,600,711 c973,635,808,630,870 c996,856,901,841,943 r1020,837,895,655,918 c1041,836,907,758,975 c1065,889,944,701,960 r1089,700,944,699,1022 r1112,680,722,625,762 c1134,650,692,635,790 r1158,383,705,337,720 c1182,382,492,380,585 c1205,465,491,380,500 c1227,503,539,435,550 r1250,474,515,374,560 c1274,476,824,475,845 c1298,831,951,793,952 c1321,946,956,870,977 c1343,946,1084,930,1103 r1367,1019,1090,1000,1105 c1391,966,1045,960,1078 r1414,940,1030,935,1045 c1436,938,1275,915,1280 r1460,1203,1239,1120,1240 c1483,1171,1180,1095,1200 c1507,1195,1243,1160,1275 r1529,1140,1248,1115,1250 r1552,1120,1135,1100,1290" />
    <Candles s={MIN3_B} rows="c56,1120,1218,1105,1219 r79,1157,1220,1130,1268 c101,1132,1153,1120,1190 r125,1070,1172,1060,1173 c148,1060,1075,1045,1090 r171,1075,1095,1030,1140 c194,1085,1100,990,1110 c217,1092,1220,1075,1245 r240,1130,1225,1085,1226 c264,1144,1176,1020,1200 r287,1145,1182,1120,1190 r310,937,1135,930,1165 r334,889,934,850,980 c357,898,904,866,1020 r381,763,906,710,920 c403,787,810,760,870 c427,842,937,838,965 c450,920,960,900,1008 c474,936,992,935,993 r496,867,991,850,992 c519,876,920,850,925 r543,810,903,780,915 r566,807,819,750,830 r588,829,837,787,840 c612,836,915,834,930 c635,951,1067,920,1078 r659,1039,1049,1020,1088 r681,1025,1050,985,1092 r705,975,1013,965,1035 c728,960,1000,945,1010 r752,960,985,915,1030 c774,980,1077,975,1090 c797,1095,1168,1080,1169 c821,1155,1297,1150,1305 c844,1304,1360,1252,1362 c866,1400,1497,1380,1500 r890,1430,1490,1420,1495 r913,1402,1425,1385,1450 r937,1250,1440,1235,1441 c961,1264,1284,1225,1310 c983,1293,1385,1262,1395 c1006,1381,1417,1345,1475 c1030,1414,1418,1403,1512 r1054,1272,1427,1255,1430 r1076,1175,1262,1165,1275 c1099,1180,1200,1120,1215 c1122,1190,1215,1160,1262 r1146,1165,1195,1145,1210 r1168,1148,1175,1130,1180 r1192,1066,1110,1032,1148 c1215,1030,1103,1025,1104" />
    <Line s={MIN3_A} c={CYAN} d="0,1170 46,1087 91,1080 139,970 184,900 232,750 300,650 348,608 417,590 440,620 486,545 533,470 578,430 648,450 671,445 742,500 764,507 811,495 856,493 904,545 949,595 996,700 1041,775 1065,812 1112,780 1134,765 1182,660 1250,575 1298,660 1343,770 1414,900 1460,1040 1507,1100 1568,1120" />
    <Line s={MIN3_B} c={CYAN} d="48,1120 60,1135 101,1138 148,1105 200,1095 264,1115 287,1115 334,1035 403,915 474,920 543,880 588,855 612,860 635,890 680,940 774,960 821,1060 866,1200 913,1290 961,1290 1030,1350 1054,1335 1099,1270 1168,1210 1215,1155" />
    <Line s={MIN3_A} c="#fff" d="0,1195 46,1148 91,1120 150,1000 208,880 232,810 276,740 324,630 348,590 417,540 440,565 486,530 540,495 578,430 626,425 648,412 671,375 740,420 811,465 880,467 930,515 973,560 1020,650 1065,735 1112,773 1134,775 1158,745 1227,660 1290,610 1343,660 1414,830 1484,1045 1530,1110 1568,1140" />
    <Line s={MIN3_B} c="#fff" d="48,1140 79,1155 125,1178 171,1145 240,1135 290,1138 334,1080 357,1065 403,1010 474,955 519,895 588,868 635,912 700,930 750,945 797,1000 890,1190 961,1280 1006,1360 1030,1376 1054,1373 1122,1300 1192,1245 1215,1215" />
    <Dotted s={MIN3_A} c="#fff" d="0,954 535,954 554,258 1134,258 1158,382 1568,382" />
    <Dotted s={MIN3_B} c="#fff" d="48,382 357,382 380,762 1215,762" />
    <Dotted s={MIN3_A} c="#00e676" d="0,1507 417,1507 440,765 1414,765 1436,1273 1568,1273" />
    <Dotted s={MIN3_B} c="#00e676" d="48,1273 844,1273 866,1485 1215,1485" />
    <Dashed s={MIN3_A} d="0,785 185,785 208,705" />
    <Dashed s={MIN3_A} d="300,523 464,523 485,502" />
    <Dashed s={MIN3_A} d="578,320 1568,320" />
    <Dashed s={MIN3_B} d="48,320 1215,320" />
    <Avg s={MIN3_A} d="0,1228 46,1207 115,1184 165,1151 232,1083 300,1011 370,950 417,918 440,908 486,870 515,849 578,775 626,742 671,709 740,680 800,652 880,615 930,608 980,612 1020,628 1065,650 1112,657 1158,650 1205,632 1250,614 1280,612 1320,632 1367,670 1414,703 1460,742 1507,788 1568,832" />
    <Avg s={MIN3_B} d="48,832 101,865 148,885 217,916 287,949 334,953 380,952 427,941 500,946 550,944 612,936 680,950 740,958 797,968 844,998 890,1040 940,1072 1006,1107 1054,1130 1110,1137 1168,1137 1215,1135" />
    <Marks
      s={MIN3_A}
      items={[
        [298, 270, "3042.04", GREY], [488, 325, "零上"], [488, 400, "金叉"], [605, 553, "面顶", CYAN],
        [1068, 1015, "二买", "#ffe0e0"], [1205, 622, "2买", "#c8c800"], [1277, 515, "靠"], [1277, 592, "零轴"],
        [1300, 832, "零下"], [1300, 908, "死叉"], [1462, 958, "类二", "#d0d000"], [1440, 1172, "三浪", CYAN],
        [1440, 1250, "下", CYAN], [1436, 1322, "三浪", YELLOW, true], [-52, 1295, "轴"],
      ]}
    />
    <Marks
      s={MIN3_B}
      items={[
        [383, 748, "靠"], [383, 825, "零轴"], [430, 870, "类", CYAN], [427, 945, "二卖", CYAN],
        [128, 1090, "面底", VIOLET], [755, 955, "靠"], [705, 1010, "靠"], [755, 1033, "零轴"],
        [705, 1088, "零轴"], [868, 1190, "5", YELLOW], [1110, 1215, "底背", GREEN], [1080, 1200, "面底", VIOLET],
        [750, 1477, "3022.82", GREY], [872, 1540, "三浪", YELLOW, true], [1120, 1565, "1秒", GREY],
      ]}
    />
    <Face s={MIN3_B} x={865} y={1388} calm />
    <Marks s={MIN3_B} items={[[870, 1397, "三浪", CYAN], [870, 1470, "下", CYAN]]} />
    <Zigzag s={MIN3_A} d="0,1078 555,228 1041,973 1205,383 1436,1275 1568,1138" />
    <Zigzag s={MIN3_B} d="48,1138 403,767 866,1497 1215,1028" />
    <Band s={MIN3_A} d="0,1222 23,1185 46,1043 139,1043 162,937 184,936 208,875 232,687 255,659 300,658 324,622 462,622 486,575 509,499 554,498 578,430 856,430 880,440 904,520 1089,520 1112,548 1158,549 1182,601 1460,601 1484,661 1553,661 1568,915" />
    <Band s={MIN3_B} d="48,915 56,1040 79,1098 194,1098 217,1200 310,1200 334,1075 357,1047 381,1047 403,926 680,926 705,933 866,933 890,945 913,1035 937,1060 1054,1060 1076,1200 1099,1275 1122,1295 1146,1297 1168,1286 1192,1258 1215,1180" />
    <Line s={MIN3_A} c="#f00" w={5} d="208,718 232,640 255,603 276,570 301,524" />
    <Line s={MIN3_A} c="#f00" w={5} d="485,502 509,478 533,440 554,340 579,320" />
    <PriceTag x={1167} y={1452} />
  </Chart>
);

const LowTen = () => (
  <Chart x={1267} y={1127} axis={2449} labels={[[1154, "3050.00"], [1322, "3040.00"], [1490, "3030.00"]]}>
    <Grid y={1490} x1={1267} x2={2449} />
    <Line s={PX} c="#fff" w={2} d="1267,1341 1290,1322" />
    <Candles s={PX} w={13} rows="r1276,1331,1357,1314,1431" />
    <Candles s={LOW10} w={14} rows="c326,0,128,0,194 c351,102,188,40,210 c375,168,261,153,293 r402,196,257,75,275 c426,207,303,112,350 r452,80,275,60,293 r477,20,70,0,90 c553,0,90,0,95 c578,87,245,85,299 c604,243,398,242,413 r629,374,407,312,417 r655,340,365,278,388 c680,333,488,332,542 c705,465,519,408,543 c731,513,549,425,560 r755,503,545,470,550 r782,445,500,430,520 r807,385,433,372,470 c831,388,413,357,430 c858,402,521,327,522 r883,382,518,365,520 c907,402,447,375,491 r934,397,428,285,440 r958,244,374,183,376 r984,193,214,117,280 c1009,215,305,198,318 r1034,300,310,265,360 r1060,265,320,225,340 r1085,170,262,168,264 c1110,168,264,162,266 c1136,262,387,231,396 c1160,375,395,333,404 r1187,322,403,308,405 r1212,305,347,280,350 c1237,324,440,275,450 c1263,438,578,425,580 c1288,558,620,550,640 r1338,541,545,508,620 c1363,546,610,507,640 r1414,502,540,480,600 r1439,470,494,430,500 c1465,475,478,440,500 r1490,470,488,440,500 r1515,415,424,350,440" />
    <Line s={LOW10} c={CYAN} d="350,42 390,110 430,160 460,140 500,90 550,75 590,130 655,240 731,380 780,428 830,428 858,440 907,430 984,350 1034,320 1085,270 1108,265 1160,290 1237,320 1280,430 1340,490 1390,558 1440,540 1515,485" />
    <Line s={LOW10} c="#fff" d="405,42 440,85 500,88 560,105 620,150 680,185 720,270 760,360 800,425 858,455 907,465 934,455 984,390 1060,350 1108,305 1187,287 1240,310 1300,400 1340,460 1400,530 1440,555 1470,570 1490,570 1515,555" />
    <Dotted s={LOW10} c="#fff" d="22,117 48,117 53,60" />
    <Dotted s={LOW10} c="#fff" d="1076,42 1085,168 1515,168" />
    <Dotted s={LOW10} c="#00e676" d="710,750 731,549 1515,549" />
    <Avg s={LOW10} d="22,332 60,300 100,265 150,235 200,210 250,188 290,168 330,158 400,161 450,166 500,148 550,127 600,130 660,145 700,168 760,205 850,235 920,255 960,259 1040,256 1120,254 1180,265 1240,275 1290,300 1340,335 1400,373 1450,390 1515,397" />
    <Marks
      s={LOW10}
      items={[
        [428, 145, "靠"], [455, 95, "靠"], [428, 240, "零轴"], [455, 180, "零轴"], [175, 15, "面顶", CYAN],
        [553, 50, "类2买", YELLOW], [733, 450, "2卖", GREEN], [733, 495, "三浪", CYAN], [733, 555, "下", CYAN],
        [731, 612, "三浪", YELLOW, true], [1033, 310, "类", CYAN], [1033, 395, "二卖", CYAN],
        [1263, 460, "零下"], [1263, 545, "死叉"], [1316, 460, "5", YELLOW], [1485, 520, "底背", GREEN],
        [1465, 485, "面底", VIOLET],
      ]}
    />
    <Face s={LOW10} x={1312} y={598} calm />
    <Zigzag s={LOW10} d="255,42 426,355 508,42" />
    <Zigzag s={LOW10} d="600,42 731,563 1009,207 1255,615" />
    <Zigzag s={LOW10} d="1375,605 1515,355" />
    <Band s={LOW10} d="22,98 45,70 58,42" />
    <Band s={LOW10} d="600,30 615,70 630,100 650,106 808,106 832,122 858,170 883,280 907,440 934,509 958,509 984,410 1009,346 1085,346 1108,301 1415,301 1440,390 1465,422 1515,422" />
    <PriceTag x={2450} y={1508} />
  </Chart>
);

const EdgeLow = () => (
  <Chart x={2549} y={1127}>
    <Grid y={1358} x1={2549} x2={2718} />
    <rect x="2551" y="1188" width="170" height="15" fill="#232323" />
    <Candles s={EDGE} w={12} rows="c385,906,1010,902,1038 c439,1010,1019,974,1021 c490,1019,1098,1018,1099 r544,1069,1095,1033,1097 c595,1096,1098,1000,1108 r649,1093,1097,1069,1121 c703,1091,1128,1088,1141 c754,1128,1203,1104,1204 r808,1170,1175,1114,1185 r859,1147,1169,1140,1187" />
    <Line s={EDGE} c="#fff" d="385,870 460,900 540,935 640,975 710,1012 780,1060 864,1106" />
    <Line s={EDGE} c={CYAN} d="385,893 440,918 490,955 590,1003 700,1050 754,1082 810,1103 864,1117" />
    <Dotted s={EDGE} c="#fff" d="385,801 864,801" />
    <Line s={EDGE} c="#888" dash="5 3" d="385,821 864,821" />
    <Dotted s={EDGE} c="#00e676" d="385,1054 703,1054 750,1201 864,1201" />
    <Marks s={EDGE} items={[[367, 852, range("3156.2", "3158.0"), GREY], [448, 925, "3150.63", GREY]]} />
    <Avg s={EDGE} d="385,930 450,932 520,941 600,952 690,963 780,977 864,992" />
    <Band s={EDGE} d="385,866 595,866 648,904 864,904" />
    <Zigzag s={EDGE} d="360,1012 754,1208 880,1142" />
  </Chart>
);

/* ---------- header pieces ---------- */

const Arrow = ({ down }) => (
  <svg width="10" height="24" viewBox="0 0 10 24" aria-hidden="true">
    <path d={down ? "M5 2v20M5 22l-3-7h6z" : "M5 22V2M5 2L2 9h6z"} stroke="currentColor" fill="currentColor" />
  </svg>
);

const Restore = () => (
  <svg width="22" height="21" viewBox="0 0 22 21" fill="none" stroke="#f00" strokeWidth="3" aria-hidden="true">
    <path d="M2 2h18v17H2zM7 7h8v7H7z" />
  </svg>
);

const TEAL = "#00d0d0";
const ROSE = "#ff3232";

const QuoteHead = ({ name, long, scrolled, quotes, signals, volume, noAxis }) => (
  <PanelTop>
    <Head>
      <HeadLine $scrolled={scrolled}>
        <KindButton type="button" aria-label="K线">
          <span>K</span>
          <svg width="6" height="4" aria-hidden="true"><path d="M0 0h6L3 4z" fill="#d00000" /></svg>
        </KindButton>
        <HeadIcon $w={29}>
          <svg width="12" height="22" viewBox="0 0 12 22" fill="none" stroke="#f00" strokeWidth="3" aria-hidden="true">
            <path d="M11 8H3v5h6v6H1M6 1v5M3 4h6" />
          </svg>
        </HeadIcon>
        <Symbol $long={long}>{name}</Symbol>
        <Stamp>24/06/13&nbsp;&nbsp;15:00</Stamp>
        {quotes.map(([text, color, down]) => (
          <Quote key={text} color={color}>
            {text}
            <Arrow down={down} />
          </Quote>
        ))}
        <Quote color={YELLOW}>量{volume}&nbsp;额</Quote>
      </HeadLine>
      <SignalLine $scrolled={scrolled}>
        <HeadIcon $w={32}>
          <svg width="14" height="14" viewBox="0 0 14 14" aria-hidden="true">
            <path d="M7 0l7 7H9v7H5V7H0z" fill="#f00" />
          </svg>
        </HeadIcon>
        <Quote color="#fff">信号64位</Quote>
        <Quote color="#686868">当前持仓:1</Quote>
        <Quote color={YELLOW}>胜率:0</Quote>
        <Quote color="#fff">交易次数:0</Quote>
        {signals.map(([text, color, down]) => (
          <Quote key={text} color={color}>
            {text}
            {down !== null && <Arrow down={down} />}
          </Quote>
        ))}
      </SignalLine>
      {!noAxis && (
        <Tags>
          <Tag type="button" $hot>复权</Tag>
          <Tag type="button">时段</Tag>
          <Tag type="button">下载</Tag>
          <Tag type="button">限量</Tag>
        </Tags>
      )}
    </Head>
    {!noAxis && <AxisHead><Restore /></AxisHead>}
  </PanelTop>
);

const MacdHead = ({ boxed, noAxis }) => (
  <PanelTop>
    <Head $boxed={boxed}>
      <MacdLine $scrolled={boxed} $boxed={boxed}>
        <span />
        <Quote color="#fff">超级MACD</Quote>
        <Quote color="#32ff32">DIFF:0.026<Arrow down /></Quote>
        <Quote color={YELLOW}>DEA:0.022<Arrow /></Quote>
        <Quote color="#ff00ff">MACD:0.008<Arrow down /></Quote>
        <Quote color="#ff0000">强:0.026<Arrow down /></Quote>
      </MacdLine>
    </Head>
    {!noAxis && <AxisHead><Restore /></AxisHead>}
  </PanelTop>
);

/* ---------- toolbar ---------- */

const glyphs = {
  link: <path d="M16 10l7-7 7 7-8 8M18 24l-7 7-7-7 8-8M12 22l10-10" />,
  download: <path d="M17 3v22M7 16l10 10 10-10M2 23v8h30v-8" />,
  refresh: <path d="M30 4v8h-8M30 12A14 14 0 0 0 4 13M4 30v-8h8M4 22a14 14 0 0 0 26-1" />,
  grid: <path d="M2 2h12v12H2zM20 2h12v12H20zM2 20h12v12H2zM20 20h12v12H20z" />,
  candle: <path d="M3 2v30h29M9 18v10M17 4v24M14 9h6v14h-6zM27 3v19M25 6h4v12h-4zM8 20h2v6H8z" />,
  bell: <path d="M17 1v3M3 27c5-4 5-8 5-14a9 9 0 0 1 18 0c0 6 0 10 5 14zM13 30c2 3 6 3 8 0" />,
  trend: <path d="M3 2h28v24H3zM3 31h28M8 20l6-9 6 6 6-9M7 19h3v3H7zM13 9h3v3h-3zM19 15h3v3h-3zM25 6h3v3h-3z" />,
  play: <><circle cx="17" cy="17" r="15" /><path d="M13 10l10 7-10 7z" fill="currentColor" /></>,
  doc: <path d="M5 2h16l8 8v22H5zM21 2v8h8M10 16h14M10 21h14M10 26h14" />,
  filter: <path d="M2 2h26L18 15v14l-5 3V15zM22 18h10M22 24h10M22 30h10" />,
  sort: <path d="M9 2v28M3 24l6 7M21 26V3l6 6M20 20h12M20 26h9M20 31h6" />,
  move: <path d="M17 2v11M17 32V21M2 17h11M32 17H21M12 7l5-5 5 5M12 27l5 5 5-5M7 12l-5 5 5 5M27 12l5 5-5 5" />,
  ruler: <path d="M3 9l6-6 22 22-6 6zM9 15l3-3M14 20l3-3M19 25l3-3M31 9l-6-6L5 23l-2 8 8-2zM21 7l6 6" />,
  zoomIn: <><circle cx="15" cy="15" r="12" /><path d="M24 24l9 9M9 15h12M15 9v12" /></>,
  zoomOut: <><circle cx="15" cy="15" r="12" /><path d="M24 24l9 9M9 15h12" /></>,
  gear: <><circle cx="17" cy="17" r="5" /><path d="M14 2h6l2 5 3 1 5-1 3 6-4 4 4 4-3 6-5-1-3 1-2 5h-6l-2-5-3-1-5 1-3-6 4-4-4-4 3-6 5 1 3-1z" /></>,
  mouse: <path d="M9 16a8 8 0 0 1 16 0v8a8 8 0 0 1-16 0zM9 16h16M17 8v8M17 8c0-4 3-5 4-5" />,
  line: <path d="M4 30L30 4" />,
  percent: <path d="M2 4h11M2 11h11M2 18h11M2 25h30M2 31h30M30 3L16 20M18 3h4v5h-4zM26 14h4v5h-4z" />,
  bars: <path d="M3 2v30M12 2v30M22 2v30M31 2v30" />,
  fan: <path d="M3 3v28h29M3 31L8 3M3 31L17 3M3 31L28 6M3 31L31 14M3 31l29-8" />,
  parallel: <><path d="M2 22L20 4M6 28L30 4M14 31l18-18" /><path d="M8 8h5v5H8zM20 8h5v5h-5zM8 22h5v5H8z" fill="#d8dcb0" stroke="none" /></>,
  fork: <path d="M4 32L20 14M6 4l22 22M4 10l8-8M11 16l8-8M17 22l8-8M23 28l8-8" />,
  rect: <><path d="M5 6h24v20H5z" /><path d="M2 3h6v6H2zM26 24h6v6h-6z" fill="#d8dcb0" stroke="none" /></>,
  circle: <circle cx="17" cy="17" r="15" />,
  text: <path d="M3 32L17 3l14 29M8 21h18" />,
  magnet: <path d="M5 3h7v15a5 5 0 0 0 10 0V3h7v15a12 12 0 0 1-24 0zM5 9h7M22 9h7" />,
  copy: <path d="M3 9h22v23H3zM10 9V2h22v24h-7M8 21h12" />,
  cross: <path d="M5 5l24 24M29 5L5 29" />,
  trash: <path d="M3 8h28M12 8V3h10v5M6 8v24h22V8M13 14v12M17 14v12M21 14v12" />,
  lock: <path d="M3 15h28v17H3zM9 15v-5a8 8 0 0 1 16 0v5M17 20v6" />,
  pen: <><path d="M5 27L26 4M5 27h8" /><path d="M2 29h28v3H2z" fill="#00a0c8" stroke="none" /></>,
  save: <path d="M3 5a3 3 0 0 1 3-3h22a3 3 0 0 1 3 3v24a3 3 0 0 1-3 3H6a3 3 0 0 1-3-3zM9 2v14h16V2M19 6v6" />,
};

const Glyph = ({ name, size = 32 }) => (
  <svg width={size} height={size} viewBox="0 0 34 34" fill="none" stroke="currentColor" strokeWidth="1.8" strokeLinejoin="round" aria-hidden="true">
    {glyphs[name]}
  </svg>
);

const DollarGlyph = styled.b`
  width: 32px;
  text-align: center;
  font-size: 32px;
  line-height: 32px;
`;

const Tool = ({ name, menu, on, off, children }) => (
  <ToolButton type="button" $menu={menu} $on={on} $off={off} disabled={off} aria-label={name}>
    {children || <Glyph name={name} />}
    {menu && <Caret />}
  </ToolButton>
);

const WordTool = styled(ToolButton)`
  justify-content: center;
  padding-left: 0;
  font-size: 27px;
`;

const MENUS = ["文件(F)", "板块(M)", "画面(P)", "查看(V)", "交易(O)", "分析(A)", "工具(T)", "窗口(W)", "帮助(H)"];

const Tools = () => (
  <ToolBar>
    <Divider />
    <Tool name="link" on />
    <Tool name="download" />
    <Tool name="refresh" />
    <Tool name="grid" menu />
    <Divider />
    <Tool name="candle" />
    <Tool name="bell" />
    <Tool name="trend" />
    <Divider />
    <Tool name="play" />
    <Tool name="doc" />
    <Tool name="dollar" menu on><DollarGlyph>$</DollarGlyph></Tool>
    <Tool name="filter" />
    <Tool name="sort" />
    <Divider />
    <Tool name="move" />
    <Tool name="ruler" />
    <Tool name="zoomIn" />
    <Tool name="zoomOut" />
    <Divider />
    <Tool name="gear" />
    <OverflowCaret />
    <Grip />
    <Tool name="mouse" on />
    <Divider />
    <Tool name="line" menu />
    <Tool name="percent" menu />
    <Tool name="bars" menu />
    <Tool name="fan" menu />
    <Tool name="parallel" menu />
    <Tool name="fork" menu />
    <Tool name="rect" menu />
    <Tool name="circle" menu />
    <Tool name="text" />
    <Divider />
    <Tool name="magnet" />
    <Tool name="copy" />
    <Tool name="cross" off />
    <Tool name="trash" off />
    <Tool name="lock" />
    <Tool name="pen" menu />
    <Tool name="save" menu />
    <Divider />
    {["买", "卖", "平", "反"].map((word) => (
      <WordTool key={word} type="button">{word}</WordTool>
    ))}
    <OverflowCaret />
  </ToolBar>
);

/* ---------- login form ---------- */

const fieldIcons = {
  company: <path d="M2 32h30M5 32V8l13-6v30M18 13l11 8v11M9 12h5M9 17h5M9 22h5M9 27h5M22 23v2M22 28v2" />,
  site: <><path d="M17 32C10 24 6 19 6 13a11 11 0 0 1 22 0c0 6-4 11-11 19z" /><circle cx="17" cy="13" r="4" /></>,
  user: <><circle cx="17" cy="10" r="8" /><path d="M3 32c0-8 5-12 10-12h8c5 0 10 4 10 12z" /></>,
  lock: <path d="M3 15h28v17H3zM9 15v-5a8 8 0 0 1 16 0v5M17 21v6" />,
  shield: <path d="M17 2c4 3 8 4 13 4v11c0 8-6 12-13 15C10 29 4 25 4 17V6c5 0 9-1 13-4zM11 17l5 5 8-9" />,
};

const FieldIcon = ({ name }) => (
  <svg width="32" height="32" viewBox="0 0 34 34" fill="none" stroke="#111" strokeWidth="2" aria-hidden="true">
    {fieldIcons[name]}
  </svg>
);

const Chevron = () => (
  <svg width="16" height="16" viewBox="0 0 16 16" fill="none" stroke="#444" strokeWidth="1.4" aria-hidden="true">
    <path d="M2 5l6 6 6-6" />
  </svg>
);

const KeyboardArt = () => (
  <svg width="54" height="42" viewBox="0 0 54 42" aria-hidden="true">
    <path d="M0 0h54v42H0z" fill="#fff" />
    <path d="M10 0l17 15L44 0h-8l-9 7-9-7zM0 10l14 11L0 32v-8l5-3-5-4zM54 10L40 21l14 11v-8l-5-3 5-4zM10 42l17-14 17 14h-8l-9-7-9 7z" fill="#999" />
    <path d="M0 1h54M8 3l10 8M46 3l-10 8M8 40l10-8M46 40l-10-8" stroke="#000" strokeWidth="3" />
    <path d="M0 12l9 9-9 9M54 12l-9 9 9 9" fill="none" stroke="#000" strokeWidth="3" />
    <path d="M27 6l16 15-16 15-16-15z" fill="#fff" stroke="#777" strokeWidth="4" />
    <path d="M30 16h-6v5h6v6h-7M1 36h5v5M48 2v5h-4M50 28h4" fill="none" stroke="#000090" strokeWidth="2" />
  </svg>
);

const LoginDialog = () => {
  const [tab, setTab] = useState("股票");
  const [remember, setRemember] = useState(true);
  const [auto, setAuto] = useState(false);

  return (
    <Dialog onSubmit={(e) => e.preventDefault()}>
      <DialogTitle>
        登录股票交易平台
        <CloseButton type="button" aria-label="关闭">
          <svg width="24" height="24" viewBox="0 0 24 24" stroke="#888" strokeWidth="2"><path d="M2 2l20 20M22 2L2 22" /></svg>
        </CloseButton>
      </DialogTitle>
      <DialogBody>
        <Tabs>
          {["期货", "股票", "期权"].map((t) => (
            <Tab key={t} type="button" $on={t === tab} onClick={() => setTab(t)}><span>{t}</span></Tab>
          ))}
        </Tabs>
        <Fields>
          <Field>
            <FieldIcon name="company" />
            <Combo>
              <Select aria-label="证券公司"><option>证券公司</option></Select>
              <Chevron />
            </Combo>
            <InfoButton type="button" aria-label="说明">
              <svg width="32" height="32" viewBox="0 0 32 32" fill="none" stroke="#3a78b5" strokeWidth="2">
                <circle cx="16" cy="16" r="15" /><path d="M16 13v11M16 8v2" />
              </svg>
            </InfoButton>
          </Field>
          <Field>
            <FieldIcon name="site" />
            <Combo $dim>
              <Select $dim aria-label="站点"><option> </option></Select>
              <Chevron />
            </Combo>
          </Field>
          <Field>
            <FieldIcon name="user" />
            <Combo>
              <Select aria-label="资金帐号"><option>资金帐号</option></Select>
              <Chevron />
            </Combo>
          </Field>
          <Field $tall>
            <FieldIcon name="lock" />
            <PasswordBox>
              <TextInput type="password" placeholder="密码" aria-label="密码" />
              <KeyboardButton type="button" aria-label="软键盘"><KeyboardArt /></KeyboardButton>
            </PasswordBox>
          </Field>
          <Field>
            <FieldIcon name="shield" />
            <TextInput $short placeholder="无需填写" aria-label="认证口令" />
          </Field>
        </Fields>
        <Checks>
          <CheckLabel>
            <CheckBox type="checkbox" checked={remember} onChange={() => setRemember(!remember)} />
            {remember && (
              <svg width="16" height="16" viewBox="0 0 16 16" fill="none" stroke="#fff" strokeWidth="1.6"><path d="M2 8l4 4 8-8" /></svg>
            )}
            记住密码
          </CheckLabel>
          <CheckLabel>
            <CheckBox type="checkbox" checked={auto} onChange={() => setAuto(!auto)} />
            10秒自动登录
          </CheckLabel>
        </Checks>
        <LoginButton type="submit">登录</LoginButton>
        <ApplyLink href="#apply">申请股票模拟帐号</ApplyLink>
      </DialogBody>
    </Dialog>
  );
};

const App = () => (
  <Screen>
    <GlobalStyle />
    <TitleBar>金字塔决策交易系统 - [100019291] - [多证券组合]</TitleBar>
    <MenuBar>
      {MENUS.map((m) => <MenuItem key={m} type="button">{m}</MenuItem>)}
    </MenuBar>
    <Tools />
    <Workspace>
      <Panel>
        <QuoteHead
          name="上证指数(1分)"
          scrolled
          quotes={[["开3028.94", TEAL, true], ["高3028.94", TEAL, true], ["低3028.92", TEAL, true], ["收3028.92", TEAL, true]]}
          signals={[["DIFF:3028.745", CYAN, false], ["MACDJX:3027.182", YELLOW, false], ["MA10:3028.599", "#fff", false]]}
          volume="3637504"
        />
        <OneMinute />
        <TimeAxis $cols="314fr 313fr 313fr 226fr 101px">
          <Tick $bare>2</Tick>
          <Tick>06/13</Tick>
          <Tick>10:59</Tick>
          <Tick>13:57</Tick>
          <Period>1分</Period>
        </TimeAxis>
      </Panel>
      <Panel>
        <QuoteHead
          name="上证指数(10分)"
          long
          quotes={[["开3027.47", TEAL, false], ["高3030.07", ROSE, false], ["低3027.37", TEAL, false], ["收3028.92", ROSE, false]]}
          signals={[["DIFF:3027.717", CYAN, false], ["MACDJX:3030.445", YELLOW, true], ["MA10:3028.226", "#fff", null]]}
          volume="14997"
        />
        <TenMinute />
        <TimeAxis $cols="4px 1fr 101px">
          <span />
          <Tick>05/31</Tick>
          <Period>10分</Period>
        </TimeAxis>
      </Panel>
      <Panel>
        <QuoteHead name="上证指数(30分)" long noAxis quotes={[]} signals={[]} volume="" />
        <EdgeTop />
        <TimeAxis $cols="4px 98px 61px 1fr">
          <span />
          <Tick>05/20</Tick>
          <Tick>22</Tick>
          <Tick>24</Tick>
        </TimeAxis>
      </Panel>
      <Panel>
        <MacdHead boxed />
        <MacdOne />
      </Panel>
      <Panel>
        <MacdHead />
        <MacdTen />
      </Panel>
      <Panel>
        <MacdHead noAxis />
        <MacdEdge />
      </Panel>
      <Panel>
        <QuoteHead
          name="上证指数(3分)"
          scrolled
          quotes={[["开3030.07", ROSE, false], ["高3030.07", ROSE, false], ["低3028.92", TEAL, false], ["收3028.92", TEAL, true]]}
          signals={[["DIFF:3028.174", CYAN, false], ["MACDJX:3028.508", YELLOW, false], ["MA10:3027.306", "#fff", false]]}
          volume="3773376"
        />
        <ThreeMinute />
      </Panel>
      <Panel>
        <QuoteHead
          name="上证指数(5分)"
          quotes={[["开3028.69", TEAL, false], ["高3030.07", ROSE, false], ["低3028.38", TEAL, false], ["收3028.92", TEAL, true]]}
          signals={[["DIFF:3028.010", CYAN, false], ["MACDJX:3029.112", YELLOW, true], ["MA10:3027.551", "#fff", null]]}
          volume="718042"
        />
        <LowTen />
      </Panel>
      <Panel>
        <QuoteHead name="上证指数(60分)" long noAxis quotes={[]} signals={[]} volume="" />
        <EdgeLow />
      </Panel>
    </Workspace>
    <LoginDialog />
    <Toast>
      <svg width="20" height="20" viewBox="0 0 34 34" fill="none" stroke="#333" strokeWidth="3" aria-hidden="true">{glyphs.gear}</svg>
    </Toast>
  </Screen>
);

export default App;
